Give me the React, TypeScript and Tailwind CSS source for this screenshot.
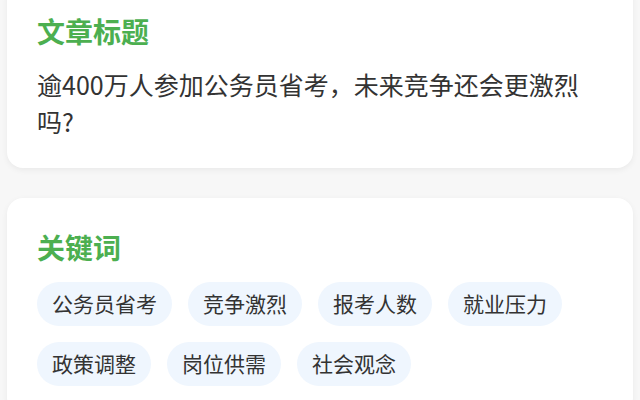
export default function App() {
  const keywords = ["公务员省考", "竞争激烈", "报考人数", "就业压力", "政策调整", "岗位供需", "社会观念"];

  return (
    <div
      className="min-h-screen bg-[#f7f7f7] px-[7px] pb-8 overflow-hidden"
      style={{ fontFamily: '"Noto Sans CJK SC", "Noto Sans", sans-serif' }}
    >
      {/* Article title card (scrolled, top cut off) */}
      <div className="-mt-[18px] bg-white rounded-[16px] shadow-[0_2px_6px_rgba(0,0,0,0.06)] px-[30px] pt-[28px] pb-[28px]">
        <h2 className="text-[28px] leading-[42px] font-bold text-[#4caf50]">文章标题</h2>
        <p className="mt-[14px] text-[25px] leading-[37px] text-[#333333]">
          逾400万人参加公务员省考，未来竞争还会更激烈吗?
        </p>
      </div>

      {/* Keywords card */}
      <div className="mt-[30px] bg-white rounded-[16px] shadow-[0_2px_6px_rgba(0,0,0,0.06)] px-[30px] pt-[28px] pb-[28px]">
        <h2 className="text-[28px] leading-[42px] font-bold text-[#4caf50]">关键词</h2>
        <div className="mt-[14px] flex flex-wrap gap-4">
          {keywords.map((k) => (
            <span
              key={k}
              className="h-[44px] px-[15px] flex items-center rounded-full bg-[#eff6fe] text-[21px] text-[#333333]"
            >
              {k}
            </span>
          ))}
        </div>
      </div>
    </div>
  );
}
